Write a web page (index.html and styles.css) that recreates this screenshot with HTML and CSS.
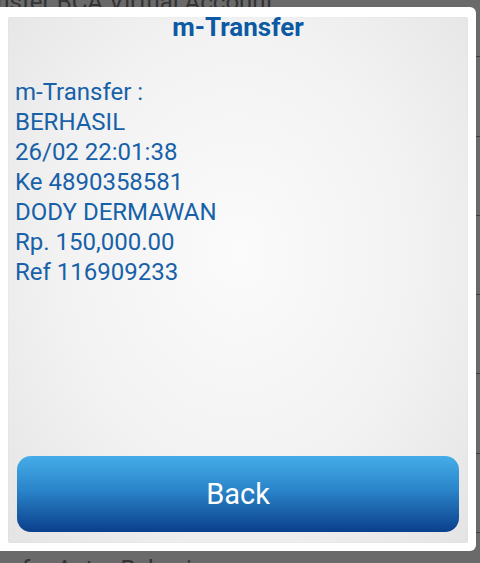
FILE: index.html
```html
<!DOCTYPE html>
<html lang="en">
<head>
	<meta charset="UTF-8">
	<title>m-Transfer</title>
	<link rel="stylesheet" href="styles.css">
</head>
<body>
	<section class="menu">
		<ul>
			<li class="first"><span>Transfer BCA Virtual Account</span></li>
			<li></li>
			<li></li>
			<li></li>
			<li></li>
			<li></li>
			<li></li>
			<li class="last"><span>Transfer Antar Rekening</span></li>
		</ul>
	</section>

	<section class="dialog">
		<section class="panel">
			<h1 class="title">m-Transfer</h1>
			<div class="result">
				<p>m-Transfer :</p>
				<p>BERHASIL</p>
				<p>26/02 22:01:38</p>
				<p>Ke 4890358581</p>
				<p>DODY DERMAWAN</p>
				<p>Rp. 150,000.00</p>
				<p>Ref 116909233</p>
			</div>
			<button class="btn_back">Back</button>
		</section>
	</section>
</body>
</html>
```

FILE: styles.css
```css
*{margin:0;padding:0;}
li{list-style: none}
html,body{
	height: 100%;
	overflow: hidden;
}
body{
	position: relative;
	background: #6a6a6a;
	font-family: Roboto, "Liberation Sans", sans-serif;
}
.menu ul{
	display: flex;
	flex-direction: column;
	margin-left: -38px;
}
.menu li{
	flex-shrink: 0;
	height: 79.3px;
	border-bottom: 1px solid #3e3e3e;
	color: #333;
	font-size: 24px;
	line-height: 28px;
	padding-top: 18px;
	box-sizing: border-box;
	white-space: nowrap;
}
.menu li.first{
	margin-top: -22px;
	padding-top: 10px;
}
.menu li.last{
	padding-top: 22px;
}
.dialog{
	position: absolute;
	left: -6px;
	top: 7px;
	width: 482px;
	height: 544px;
	box-sizing: border-box;
	padding: 10px 8px 8px 14px;
	background: #fff;
	border-radius: 6px;
}
.dialog .panel{
	display: flex;
	flex-direction: column;
	height: 100%;
	border-radius: 3px;
	background: radial-gradient(ellipse at 50% 45%, #fbfbfb 0%, #f2f2f2 55%, #e4e4e4 100%);
	box-shadow: inset 0 0 1px rgba(0,0,0,0.12);
}
.panel .title{
	margin-top: -1px;
	text-align: center;
	font-size: 26px;
	line-height: 22px;
	font-weight: bold;
	color: #0c5aa4;
}
.panel .result{
	margin-top: 39px;
	padding-left: 7px;
	font-size: 24px;
	line-height: 30px;
	color: #1761a9;
	flex: 1;
}
.panel .btn_back{
	margin: 0 9px 11px 9px;
	height: 76px;
	border: none;
	border-radius: 14px;
	background: linear-gradient(#45ade9, #2a84c9 45%, #0a3f8b);
	color: #fff;
	font-family: Roboto, "Liberation Sans", sans-serif;
	font-size: 29px;
}
```
